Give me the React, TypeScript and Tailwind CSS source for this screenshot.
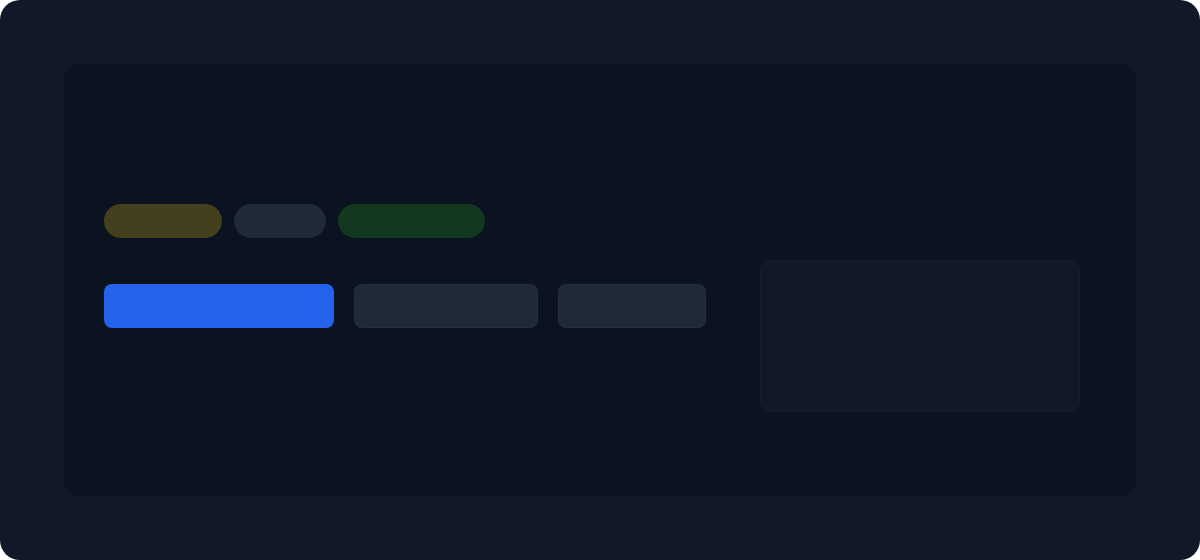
const pills = [
  { width: 'w-[118px]', color: 'bg-[#443f1c]' },
  { width: 'w-[92px]', color: 'bg-[#1f2937]' },
  { width: 'w-[147px]', color: 'bg-[#12381f]' },
];

export default function App() {
  return (
    <div className="h-[560px] w-[1200px] bg-white">
      <div className="h-full rounded-[20px] bg-[#111827] p-16">
        <div className="flex h-full items-start rounded-2xl bg-[#0b1320] pl-10 pr-14 pt-[140px]">
          <div className="flex flex-col">
            <div className="flex gap-3">
              {pills.map((pill, i) => (
                <div key={i} className={`h-[34px] rounded-full ${pill.width} ${pill.color}`} />
              ))}
            </div>
            <div className="mt-[46px] flex gap-5">
              <div className="h-[44px] w-[230px] rounded-lg bg-[#2563eb]" />
              <div className="h-[44px] w-[184px] rounded-lg border border-white/[0.03] bg-[#1f2937]" />
              <div className="h-[44px] w-[148px] rounded-lg border border-white/[0.03] bg-[#1f2937]" />
            </div>
          </div>
          <div className="ml-auto mt-[56px] h-[152px] w-[320px] rounded-xl border border-white/[0.02] bg-[#111827]" />
        </div>
      </div>
    </div>
  );
}
